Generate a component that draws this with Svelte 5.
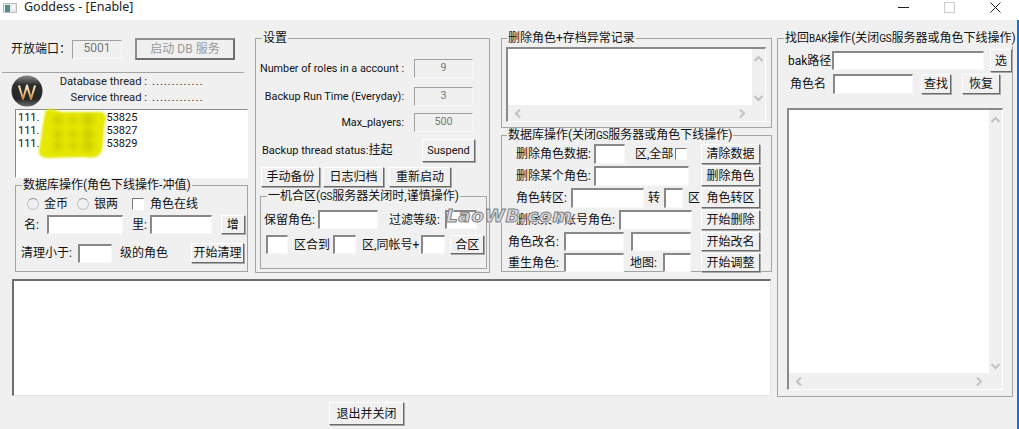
<script>
	const listRows = ['53825', '53827', '53829']
</script>

{#snippet scrollbars(cls)}
	<div class="scrollbox {cls}">
		<div class="scroll-view"></div>
		<div class="vbar">
			<svg width="11" height="8" viewBox="0 0 11 8"><path d="M1.5 6 5.5 2l4 4" /></svg>
			<svg width="11" height="8" viewBox="0 0 11 8"><path d="M1.5 2l4 4 4-4" /></svg>
		</div>
		<div class="hbar">
			<svg width="8" height="11" viewBox="0 0 8 11"><path d="M6 1.5 2 5.5l4 4" /></svg>
			<svg width="8" height="11" viewBox="0 0 8 11"><path d="M2 1.5l4 4-4 4" /></svg>
		</div>
	</div>
{/snippet}

<div class="window">
	<header class="titlebar">
		<svg class="appicon" width="14" height="10" viewBox="0 0 14 10">
			<rect x="0.5" y="0.5" width="13" height="9" fill="#e4e8e8" stroke="#b8c0c0" />
			<rect x="2" y="2" width="5" height="7" fill="#4f8f88" />
			<rect x="9" y="2" width="3" height="4" fill="#fff" />
		</svg>
		<span class="title">Goddess - [Enable]</span>
		<div class="winctl">
			<svg width="11" height="11" viewBox="0 0 11 11"><path d="M0 5.500h11" stroke="#222" /></svg>
			<svg width="11" height="11" viewBox="0 0 11 11"><rect x="0.5" y="0.5" width="10" height="10" fill="none" stroke="#ccc" /></svg>
			<svg width="11" height="11" viewBox="0 0 11 11"><path d="M0.500 0.500l10 10M10.500 0.500l-10 10" stroke="#222" fill="none" /></svg>
		</div>
	</header>

	<main class="content">
		<div class="top">
			<section class="col1">
				<div class="port-row">
					<label class="port-label" for="port">开放端口：</label>
					<input id="port" class="field dis w50 h19" value="5001" disabled />
					<button class="btn default" disabled>启动 DB 服务</button>
				</div>
				<hr class="sep" />
				<div class="thread-row">
					<svg class="logo" width="32" height="32" viewBox="0 0 32 32">
						<defs>
							<linearGradient id="disc" x1="0" y1="0" x2="0" y2="1">
								<stop offset="0" stop-color="#8a8a8a" />
								<stop offset="0.3" stop-color="#2e2e2e" />
								<stop offset="0.75" stop-color="#262626" />
								<stop offset="1" stop-color="#6a6a6a" />
							</linearGradient>
							<linearGradient id="wave" x1="0" y1="9" x2="0" y2="25" gradientUnits="userSpaceOnUse">
								<stop offset="0" stop-color="#fff6e4" />
								<stop offset="0.5" stop-color="#f0c48a" />
								<stop offset="1" stop-color="#b87a3a" />
							</linearGradient>
						</defs>
						<circle cx="16" cy="16" r="15.500" fill="url(#disc)" />
						<path d="M8 10.500 12 24 16 10.500 20 24 24 10.500" fill="none" stroke="url(#wave)" stroke-width="2" stroke-linejoin="round" />
					</svg>
					<div class="threads">
						<div><span class="tl">Database thread :</span><span class="dots">.............</span></div>
						<div><span class="tl">Service thread :</span><span class="dots">.............</span></div>
					</div>
				</div>
				<div class="iplist">
					{#each listRows as row}
						<div class="iprow"><span>111.</span><span class="tail">{row}</span></div>
					{/each}
					<svg class="scribble" width="70" height="52" viewBox="0 0 70 52">
						<path d="M8 2C14 -1 18 3 24 4L62 4C68 4 69 9 67 14 65 24 66 34 64 42 62 49 56 51 46 49L10 50C3 50 0 47 1 41 4 30 4 14 8 2Z" fill="#e6e800" />
						<g class="patches" fill="#cfd000">
							<circle cx="20" cy="12" r="5" /><circle cx="35" cy="12" r="4" /><circle cx="50" cy="12" r="6" />
							<circle cx="20" cy="26" r="5" /><circle cx="35" cy="26" r="4" /><circle cx="50" cy="26" r="6" />
							<circle cx="20" cy="38" r="5" /><circle cx="35" cy="38" r="4" /><circle cx="50" cy="38" r="6" />
						</g>
					</svg>
				</div>
				<fieldset class="group db-group">
					<legend>数据库操作(角色下线操作-冲值)</legend>
					<div class="row r-radios">
						<input class="radio" type="radio" name="cur" disabled />
						<span class="ml5">金币</span>
						<input class="radio ml9" type="radio" name="cur" disabled />
						<span class="ml5">银两</span>
						<input class="check ml14" type="checkbox" disabled />
						<span class="ml6">角色在线</span>
					</div>
					<div class="row r-name">
						<span>名:</span>
						<input class="field w76 h19 ml8" />
						<span class="ml9">里:</span>
						<input class="field w62 h19 ml3" />
						<button class="btn w24 h19 ml9">增</button>
					</div>
					<div class="row r-clear">
						<span>清理小于:</span>
						<input class="field w34 h19 ml6" />
						<span class="ml8">级的角色</span>
						<button class="btn w53 h20 ml23">开始清理</button>
					</div>
				</fieldset>
			</section>

			<section class="col2">
				<fieldset class="group settings">
					<legend>设置</legend>
					<div class="cfg c1"><span>Number of roles in a account :</span><input class="field dis w59 h19" value="9" disabled /></div>
					<div class="cfg c2"><span>Backup Run Time (Everyday):</span><input class="field dis w59 h19" value="3" disabled /></div>
					<div class="cfg c3"><span>Max_players:</span><input class="field dis w59 h19" value="500" disabled /></div>
					<div class="status">
						<span>Backup thread status:<span class="cjk">挂起</span></span>
						<button class="btn w53 h23">Suspend</button>
					</div>
					<div class="actions">
						<button class="btn w59 h20">手动备份</button>
						<button class="btn w61 h20">日志归档</button>
						<button class="btn w62 h20">重新启动</button>
					</div>
					<fieldset class="group merge">
						<legend>一机合区(<span class="sm">GS</span>服务器关闭时,谨慎操作)</legend>
						<div class="row m1">
							<span>保留角色:</span>
							<input class="field w60 h19 ml3" />
							<span class="ml11">过滤等级:</span>
							<input class="field w32 h19 ml5" />
						</div>
						<div class="row m2">
							<input class="field w22 h19" />
							<span class="ml6">区合到</span>
							<input class="field w23 h19 ml3" />
							<span class="ml6">区,同帐号+</span>
							<input class="field w24 h19 ml2" />
							<button class="btn w34 h19 ml5">合区</button>
						</div>
					</fieldset>
				</fieldset>
			</section>

			<section class="col3">
				<fieldset class="group err-group">
					<legend>删除角色+存档异常记录</legend>
					{@render scrollbars('err-box')}
				</fieldset>
				<fieldset class="group ops">
					<legend>数据库操作(关闭<span class="sm">GS</span>服务器或角色下线操作)</legend>
					<div class="ops-row">
						<span class="ml14">删除角色数据:</span>
						<input class="field w31 h20 ml3" />
						<span class="ml10">区,全部</span>
						<input class="check ml2" type="checkbox" />
						<button class="btn w59 h20">清除数据</button>
					</div>
					<div class="ops-row">
						<span class="ml14">删除某个角色:</span>
						<input class="field w95 h20 ml3" />
						<button class="btn w59 h20">删除角色</button>
					</div>
					<div class="ops-row">
						<span class="ml14">角色转区:</span>
						<input class="field w73 h20 ml4" />
						<span class="ml4">转</span>
						<input class="field w19 h20 ml4" />
						<span class="ml5">区</span>
						<button class="btn w59 h20">角色转区</button>
					</div>
					<div class="ops-row">
						<span class="ml14">删除某个账号角色:</span>
						<input class="field w73 h20 ml4" />
						<button class="btn w59 h20">开始删除</button>
					</div>
					<div class="ops-row tight">
						<span class="ml6">角色改名:</span>
						<input class="field w60 h19 ml5" />
						<input class="field w60 h19 ml7" />
						<button class="btn w59 h19">开始改名</button>
					</div>
					<div class="ops-row tight">
						<span class="ml6">重生角色:</span>
						<input class="field w60 h19 ml5" />
						<span class="ml6">地图:</span>
						<input class="field w28 h19 ml6" />
						<button class="btn w59 h19">开始调整</button>
					</div>
				</fieldset>
			</section>

			<section class="col4">
				<fieldset class="group bak">
					<legend>找回<span class="sm">BAK</span>操作(关闭<span class="sm">GS</span>服务器或角色下线操作)</legend>
					<div class="row b1">
						<span class="bak-label">bak路径</span>
						<input class="field w152 h19" />
						<button class="btn w22 h23 ml6">选</button>
					</div>
					<div class="row b2">
						<span class="bak-label name">角色名</span>
						<input class="field w80 h20" />
						<button class="btn w30 h20 ml8">查找</button>
						<button class="btn w38 h20 ml11">恢复</button>
					</div>
					{@render scrollbars('bak-box')}
				</fieldset>
			</section>
		</div>

		<div class="log-wrap">
			<div class="log"></div>
		</div>
		<footer class="foot">
			<button class="btn exit">退出并关闭</button>
		</footer>
		<span class="watermark">LaoWB.com</span>
	</main>
	<div class="edge"></div>
</div>

<style>
	:global(body) {
		margin: 0;
		background: #f0f0f0;
		overflow: hidden;
	}

	.window {
		position: relative;
		width: 1019px;
		height: 429px;
		overflow: hidden;
		background: #f0f0f0;
		color: #111;
		font: 12px/14px Roboto, "Noto Sans CJK SC", sans-serif;
	}

	.edge {
		position: absolute;
		top: 20px;
		right: 0;
		width: 2px;
		bottom: 0;
		background: #0a78d4;
	}

	.titlebar {
		display: flex;
		align-items: flex-start;
		height: 20px;
		background: #fff;
		padding-left: 3px;
		box-sizing: border-box;
	}

	.appicon {
		margin-top: 3px;
	}

	.title {
		margin-left: 7px;
		font: 12.5px/14px "Noto Sans", sans-serif;
		color: #222;
	}

	.winctl {
		display: flex;
		gap: 35px;
		margin: 2px 18px 0 auto;
	}

	.content {
		position: relative;
	}

	.top {
		display: flex;
		height: 252px;
	}

	/* win32 controls */
	.field {
		box-sizing: border-box;
		margin: 0;
		padding: 0 2px;
		background: #fff;
		border: 1px solid #f8f8f8;
		border-top: 2px solid #888;
		border-left: 2px solid #888;
		font: inherit;
		text-align: center;
		color: #111;
		outline: none;
		flex: none;
	}

	.field.dis {
		background: #f0f0f0;
		color: #777;
		border-top: 1px solid #a0a0a0;
		border-left: 1px solid #a0a0a0;
		padding-bottom: 3px;
	}

	.btn {
		box-sizing: border-box;
		margin: 0;
		padding: 0;
		background: #f0f0f0;
		border: 1px solid;
		border-color: #fff #6a6a6a #6a6a6a #fff;
		box-shadow: 1px 1px 0 #a8a8a8;
		font: inherit;
		color: #111;
		white-space: nowrap;
		flex: none;
	}

	.btn.default {
		width: 100px;
		height: 22px;
		margin-left: 13px;
		border: 2px solid #6e6e6e;
		border-top-color: #8e8e8e;
		border-left-color: #8e8e8e;
		box-shadow: none;
		color: #9a9a9a;
	}

	.group {
		box-sizing: border-box;
		min-width: 0;
		margin: 0;
		padding: 0;
		border: 1px solid #a4a4a4;
	}

	.group > legend {
		margin-left: 6px;
		padding: 0 1px;
		white-space: nowrap;
	}

	.sm {
		font-size: 10px;
		letter-spacing: -0.3px;
	}

	.cjk {
		font-size: 12px;
	}

	.row {
		display: flex;
		align-items: center;
		white-space: nowrap;
	}

	.radio,
	.check {
		appearance: none;
		box-sizing: border-box;
		margin: 0;
		flex: none;
	}

	.radio {
		width: 12px;
		height: 12px;
		border-radius: 50%;
		border: 1px solid #c4c4c4;
		border-top-color: #8a8a8a;
		background: #f0f0f0;
	}

	.check {
		width: 12px;
		height: 12px;
		background: #fff;
		border: 1px solid #fff;
		border-top-color: #777;
		border-left-color: #777;
	}

	/* column 1 */
	.col1 {
		width: 246px;
		margin-left: 2px;
		flex: none;
	}

	.port-row {
		display: flex;
		align-items: center;
		padding-top: 18px;
		height: 22px;
	}

	.port-label {
		margin-left: 9px;
		width: 61px;
	}

	.sep {
		margin: 12px 0 0;
		width: 242px;
		height: 1px;
		border: 0;
		background: #a4a4a4;
	}

	.thread-row {
		display: flex;
		height: 36px;
		padding-top: 2px;
		box-sizing: border-box;
	}

	.logo {
		margin-left: 9px;
		flex: none;
	}

	.threads {
		margin: -1px 0 0 4px;
		color: #222;
		font-size: 11.2px;
	}

	.threads > div {
		display: flex;
		height: 16px;
		align-items: center;
	}

	.tl {
		width: 100px;
		text-align: right;
		white-space: nowrap;
	}

	.dots {
		margin-left: 5px;
		letter-spacing: 1px;
	}

	.iplist {
		position: relative;
		box-sizing: border-box;
		margin-left: 13px;
		width: 233px;
		height: 69px;
		background: #fff;
		border: 1px solid #fff;
		border-top: 1px solid #8a8a8a;
		border-left: 1px solid #8a8a8a;
		padding: 1px 0 0 2px;
	}

	.iprow {
		display: flex;
		height: 13px;
		font-size: 11px;
		line-height: 13px;
	}

	.tail {
		margin-left: 67px;
	}

	.scribble {
		position: absolute;
		left: 22px;
		top: -2px;
		filter: blur(0.8px);
	}

	.patches {
		filter: blur(2px);
	}

	.db-group {
		margin-left: 13px;
		width: 233px;
		height: 94px;
	}

	.r-radios {
		margin: 5px 0 0 11px;
		height: 14px;
	}

	.r-name {
		margin: 4px 0 0 8px;
		height: 19px;
	}

	.r-clear {
		margin: 9px 0 0 5px;
		height: 20px;
	}

	/* column 2 */
	.col2 {
		margin-left: 7px;
		width: 235px;
		flex: none;
	}

	.settings {
		width: 235px;
		height: 242px;
		margin-top: 11px;
	}

	.cfg {
		display: flex;
		justify-content: flex-end;
		align-items: center;
		gap: 10px;
		font-size: 10.8px;
		white-space: nowrap;
		padding-right: 16px;
		height: 19px;
	}

	.c1 {
		margin-top: 14px;
	}

	.c2 {
		margin-top: 9px;
	}

	.c3 {
		margin-top: 7px;
	}

	.status {
		display: flex;
		align-items: center;
		justify-content: space-between;
		margin: 7px 14px 0 6px;
		height: 23px;
		font-size: 11px;
		white-space: nowrap;
	}

	.actions {
		display: flex;
		gap: 3px;
		margin: 5px 0 0 5px;
	}

	.actions .w62 {
		margin-left: 2px;
	}

	.merge {
		width: 227px;
		height: 80px;
		margin: 2px 0 0 4px;
	}

	.m1 {
		margin: 6px 0 0 3px;
	}

	.m2 {
		margin: 6px 0 0 5px;
	}

	/* column 3 */
	.col3 {
		margin-left: 11px;
		width: 271px;
		flex: none;
	}

	.col3 .group > legend {
		margin-left: 5px;
	}

	.err-group {
		width: 271px;
		height: 97px;
		margin-top: 11px;
	}

	.scrollbox {
		display: grid;
		grid-template-columns: 1fr 13px;
		grid-template-rows: 1fr 16px;
		box-sizing: border-box;
		background: #f0f0f0;
		border: 1px solid #fff;
		border-top: 2px solid #8a8a8a;
		border-left: 2px solid #8a8a8a;
	}

	.scroll-view {
		background: #fff;
	}

	.vbar {
		grid-row: 1 / 3;
		grid-column: 2;
		display: flex;
		flex-direction: column;
		justify-content: space-between;
		align-items: center;
		padding: 6px 0 19px;
	}

	.hbar {
		display: flex;
		justify-content: space-between;
		align-items: center;
		padding: 0 6px;
	}

	.scrollbox svg path {
		fill: none;
		stroke: #c2c2c2;
		stroke-width: 2;
	}

	.err-box {
		margin: 2px 0 0 4px;
		width: 260px;
		height: 75px;
	}

	.ops {
		width: 271px;
		height: 144px;
	}

	.ops-row {
		display: flex;
		align-items: center;
		height: 22px;
		white-space: nowrap;
	}

	.ops-row.tight {
		height: 21px;
	}

	.ops-row .btn {
		margin-left: auto;
		margin-right: 11px;
	}

	/* column 4 */
	.col4 {
		margin-left: 5px;
		width: 236px;
		flex: none;
	}

	.bak {
		width: 236px;
		height: 366px;
		margin-top: 11px;
	}

	.bak-label {
		margin-left: 10px;
		width: 45px;
	}

	.bak-label.name {
		margin-left: 12px;
		width: 43px;
	}

	.b1 {
		height: 23px;
		margin-top: 3px;
	}

	.b2 {
		height: 20px;
		margin-top: 2px;
	}

	.bak-box {
		margin: 14px 0 0 9px;
		width: 216px;
		height: 282px;
	}

	/* log and footer */
	.log-wrap {
		padding: 7px 0 0 12px;
	}

	.log {
		width: 759px;
		height: 117px;
		box-sizing: border-box;
		background: #fff;
		border: 1px solid #e4e4e4;
		border-top: 2px solid #6e6e6e;
		border-left: 2px solid #6e6e6e;
	}

	.foot {
		padding: 6px 0 0 329px;
	}

	.exit {
		width: 75px;
		height: 23px;
	}

	.watermark {
		position: absolute;
		left: 446px;
		top: 185px;
		font: italic 700 18.5px/22px "DejaVu Sans", sans-serif;
		letter-spacing: 0.5px;
		color: #dadada;
		-webkit-text-stroke: 1px #808080;
		text-shadow: 1px 1px 0 #fff;
	}

	/* widths, heights and gaps of the dialog controls */
	.w19 { width: 19px; }
	.w22 { width: 22px; }
	.w23 { width: 23px; }
	.w24 { width: 24px; }
	.w28 { width: 28px; }
	.w30 { width: 30px; }
	.w31 { width: 31px; }
	.w32 { width: 32px; }
	.w34 { width: 34px; }
	.w38 { width: 38px; }
	.w50 { width: 50px; }
	.w53 { width: 53px; }
	.w59 { width: 59px; }
	.w60 { width: 60px; }
	.w61 { width: 61px; }
	.w62 { width: 62px; }
	.w73 { width: 73px; }
	.w76 { width: 76px; }
	.w80 { width: 80px; }
	.w95 { width: 95px; }
	.w152 { width: 152px; }
	.h19 { height: 19px; }
	.h20 { height: 20px; }
	.h23 { height: 23px; }
	.ml2 { margin-left: 2px; }
	.ml3 { margin-left: 3px; }
	.ml4 { margin-left: 4px; }
	.ml5 { margin-left: 5px; }
	.ml6 { margin-left: 6px; }
	.ml7 { margin-left: 7px; }
	.ml8 { margin-left: 8px; }
	.ml9 { margin-left: 9px; }
	.ml10 { margin-left: 10px; }
	.ml11 { margin-left: 11px; }
	.ml14 { margin-left: 14px; }
	.ml23 { margin-left: 23px; }
</style>
